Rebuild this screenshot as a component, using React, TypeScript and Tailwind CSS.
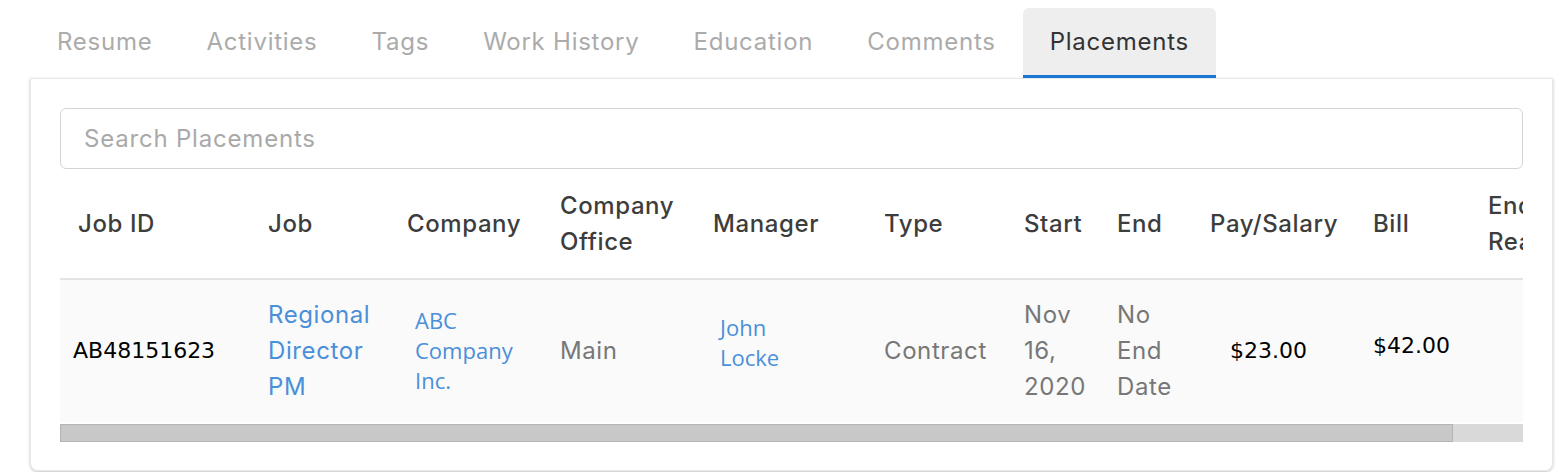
const tabs = ["Resume", "Activities", "Tags", "Work History", "Education", "Comments", "Placements"];

const headers = ["Job ID", "Job", "Company", "Company Office", "Manager", "Type", "Start", "End", "Pay/Salary", "Bill", "End Reason"];

const cols = "grid grid-cols-[190px_139px_153px_153px_171px_140px_93px_93px_163px_115px_126px]";

const App = () => {
  return (
    <div
      className="w-[1563px] h-[472px] overflow-hidden bg-white"
      style={{ fontFamily: "Inter, 'Open Sans', sans-serif" }}
    >
      {/* Tabs */}
      <div className="flex pl-[30px] pt-2">
        {tabs.map((t) => {
          const active = t === "Placements";
          return (
            <div
              key={t}
              className={
                active
                  ? "h-[70px] px-[27px] flex items-center text-[24px] tracking-[0.75px] text-[#333] bg-[#eeeeee] rounded-t-md border-b-[3px] border-[#1976d2]"
                  : "h-[70px] px-[27px] flex items-center text-[24px] tracking-[0.75px] text-[#ababab] border-b-[3px] border-transparent"
              }
            >
              {t}
            </div>
          );
        })}
      </div>

      {/* Card */}
      <div className="ml-[30px] w-[1523px] h-[393px] border border-[#e8e8e8] rounded-b-lg shadow-[0_1px_3px_rgba(0,0,0,0.25)] px-[29px] pt-[29px]">
        <div className="h-[61px] border border-[#d4d4d4] rounded-md flex items-center px-[23px] text-[24px] tracking-[0.8px] text-[#a9a9a9]">
          Search Placements
        </div>

        <div className="overflow-hidden">
          <div className="w-[1536px]">
            {/* Header */}
            <div className={`${cols} h-[109px] text-[24px] leading-[36px] tracking-[0.6px] font-medium text-[#3d3d3d]`}>
              {headers.map((h) => (
                <div key={h} className="flex items-center pl-[18px] whitespace-normal">
                  <span>{h}</span>
                </div>
              ))}
            </div>
            <div className="h-[2px] bg-[#e3e3e3]" />

            {/* Row */}
            <div className={`${cols} h-[142px] bg-[#fafafa] text-[24px] leading-[36px] tracking-[0.6px] text-[#777]`}>
              <div
                className="flex items-center pl-[13px] text-[22px] tracking-normal text-black"
                style={{ fontFamily: "'DejaVu Sans', sans-serif" }}
              >
                AB48151623
              </div>
              <div className="flex items-center pl-[18px] text-[#4a8fd9]">Regional Director PM</div>
              <div
                className="flex items-center pl-[26px] pr-[20px] pb-[2px] text-[22px] leading-[30px] tracking-normal text-[#4a8fd9]"
                style={{ fontFamily: "'Open Sans', sans-serif" }}
              >
                ABC Company Inc.
              </div>
              <div className="flex items-center pl-[18px]">Main</div>
              <div
                className="flex items-center pl-[25px] pb-[18px] text-[22px] leading-[30px] tracking-normal text-[#4a8fd9]"
                style={{ fontFamily: "'Open Sans', sans-serif" }}
              >
                <span className="w-[70px]">John Locke</span>
              </div>
              <div className="flex items-center pl-[18px]">Contract</div>
              <div className="flex items-center pl-[18px]">Nov 16, 2020</div>
              <div className="flex items-center pl-[18px]">No End Date</div>
              <div
                className="flex items-center pl-[38px] text-[22px] tracking-normal text-black"
                style={{ fontFamily: "'DejaVu Sans', sans-serif" }}
              >
                $23.00
              </div>
              <div
                className="flex items-center pl-[18px] pb-[10px] text-[22px] tracking-normal text-black"
                style={{ fontFamily: "'DejaVu Sans', sans-serif" }}
              >
                $42.00
              </div>
              <div />
            </div>
          </div>
        </div>

        {/* Scrollbar */}
        <div className="mt-[2px] h-[18px] bg-[#d9d9d9] flex">
          <div className="w-[1393px] h-full bg-[#c8c8c8] border border-[#b4b4b4]" />
        </div>
      </div>
    </div>
  );
};

export default App;
